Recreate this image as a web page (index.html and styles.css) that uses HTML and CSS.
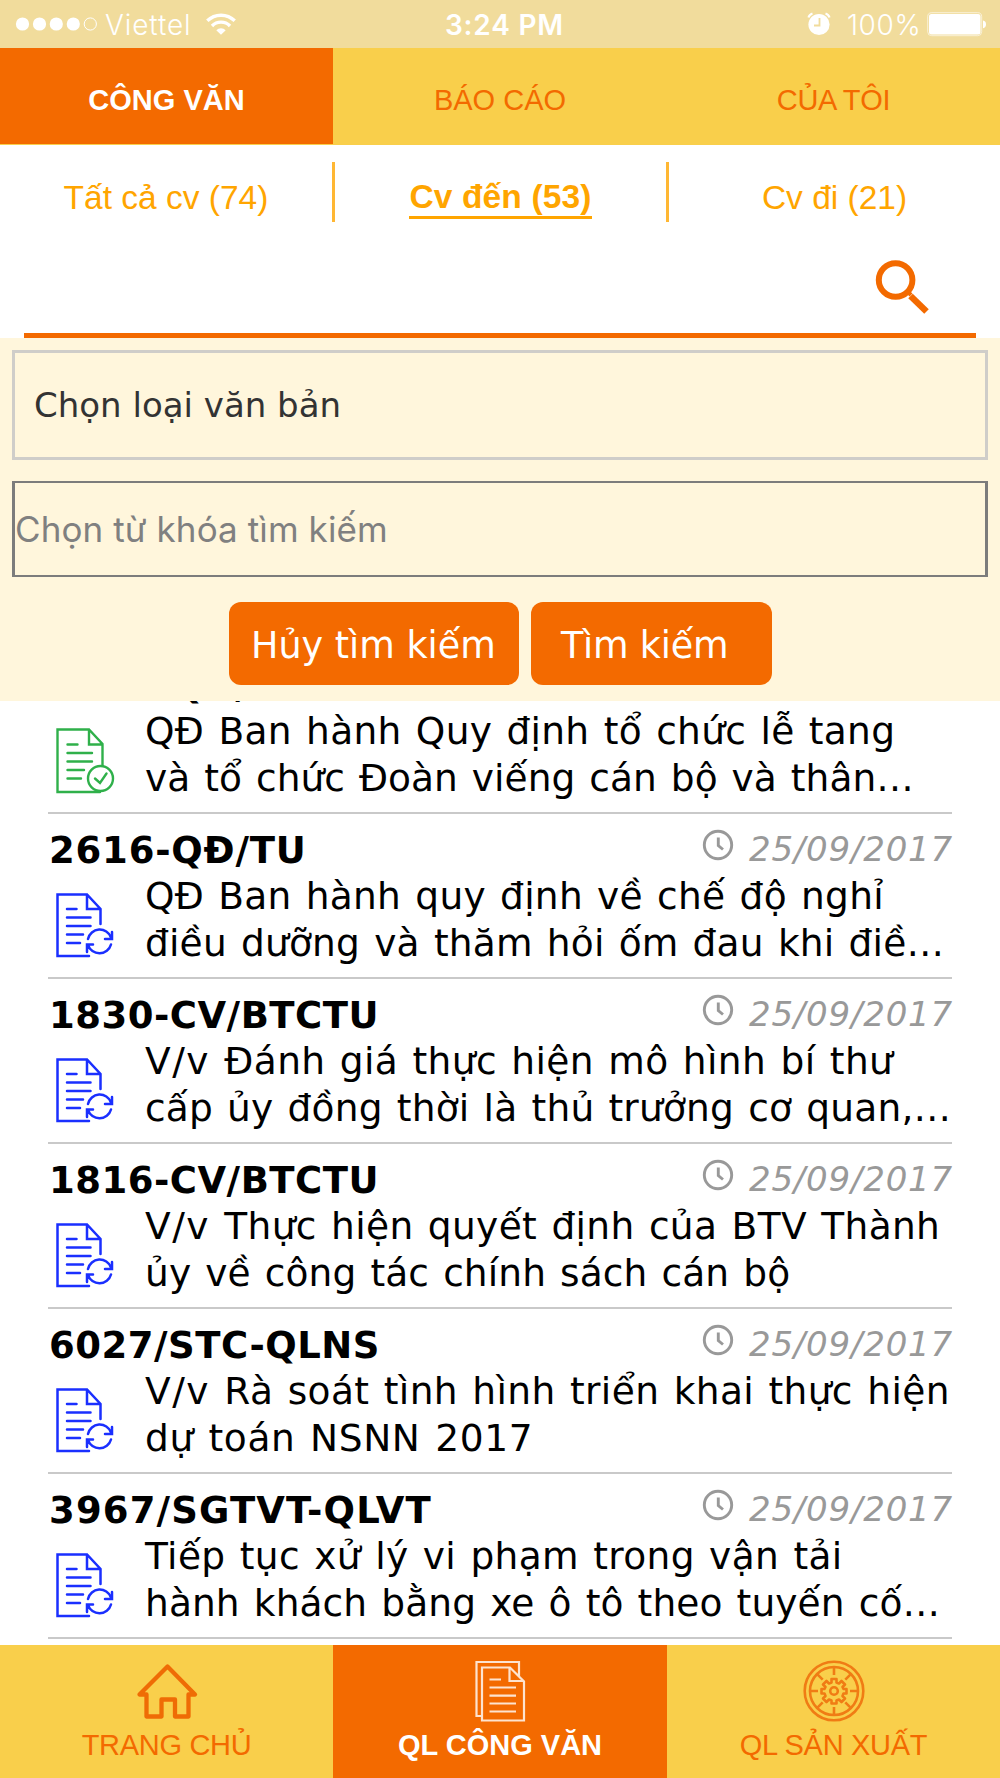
FILE: index.html
```html
<!DOCTYPE html>
<html lang="vi">
<head>
<meta charset="utf-8">
<title>Công văn</title>
<link rel="stylesheet" href="styles.css">
</head>
<body>
<svg class="defs" aria-hidden="true">
  <symbol id="doc-sync" viewBox="0 0 60 68">
    <g fill="none" stroke="currentColor" stroke-width="2.500" stroke-linecap="round">
      <path d="M33 65H1.500V3.500H31L44.500 18V33M31 3.500V18H44.500"/>
      <path d="M11 18H20.500M11 26.500H34.500M11 35H34.500M11 43.500H27M11 52H24"/>
      <path d="M32 48A12 12 0 0 1 55 46.500M56 41V48H49M55 53.500A12 12 0 0 1 32 54M31 61V53.500H37"/>
    </g>
  </symbol>
  <symbol id="doc-check" viewBox="0 0 60 68">
    <g fill="none" stroke="currentColor" stroke-width="2.400" stroke-linecap="round">
      <path d="M44 66H1.500V3.500H33L46.500 18V39.500M33 3.500V18.500H46.500"/>
      <path d="M11.500 18.500H21.500M11.500 27H36M11.500 35.500H36M11.500 44H28M11.500 52.500H25"/>
      <circle cx="44.500" cy="52.500" r="12.500"/>
      <path d="M39 52.500L44 57L50.500 47.500"/>
    </g>
  </symbol>
  <symbol id="clock" viewBox="0 0 32 32">
    <g fill="none" stroke="currentColor" stroke-width="2.900">
      <circle cx="16" cy="16" r="13.700"/>
      <path d="M16.300 8.500V16.500L21 20.500"/>
    </g>
  </symbol>
</svg>

<header class="status">
  <svg class="signal" width="84" height="16" viewBox="0 0 84 16">
    <g fill="#fff"><circle cx="7.500" cy="8" r="6.600"/><circle cx="24.500" cy="8" r="6.600"/><circle cx="41.300" cy="8" r="6.600"/><circle cx="58.300" cy="8" r="6.600"/></g>
    <circle cx="75.300" cy="8" r="6.100" fill="none" stroke="#fff"/>
  </svg>
  <span class="carrier">Viettel</span>
  <svg class="wifi" width="30" height="22" viewBox="0 0 30 22">
    <g fill="none" stroke="#fff" stroke-width="3.400"><path d="M1.300 7.800A19.500 19.500 0 0 1 28.700 7.800"/><path d="M6 13A12.500 12.500 0 0 1 24 13"/></g>
    <path d="M10.300 17.200A6.700 6.700 0 0 1 19.700 17.200L15 21.700Z" fill="#fff"/>
  </svg>
  <span class="time">3:24 PM</span>
  <svg class="alarm" width="24" height="24" viewBox="0 0 24 24">
    <circle cx="12" cy="12.500" r="10.600" fill="#fff"/>
    <path d="M1.500 5.500A6 6 0 0 1 5.500 1.500M18.500 1.500A6 6 0 0 1 22.500 5.500" fill="none" stroke="#fff" stroke-width="2.200"/>
    <path d="M12.500 6V13.500H7" fill="none" stroke="#f1dc9c" stroke-width="1.800"/>
  </svg>
  <span class="percent">100%</span>
  <svg class="battery" width="60" height="25" viewBox="0 0 60 25">
    <rect x=".7" y=".7" width="54" height="23" rx="4" fill="none" stroke="#fff" stroke-opacity=".6"/>
    <rect x="2" y="2" width="51.500" height="20.500" rx="2.500" fill="#fff"/>
    <path d="M56 8.500Q59 9 59 12.300T56 16.200Z" fill="#fff"/>
  </svg>
</header>

<nav class="tabs">
  <a class="tab active">CÔNG VĂN</a>
  <a class="tab">BÁO CÁO</a>
  <a class="tab tight">CỦA TÔI</a>
</nav>

<nav class="filters">
  <a class="filter"><span>Tất cả cv (74)</span></a>
  <a class="filter active"><span>Cv đến (53)</span></a>
  <a class="filter"><span>Cv đi (21)</span></a>
</nav>

<div class="search">
  <svg width="56" height="56" viewBox="0 0 56 56" fill="none" stroke="#f36a00">
    <circle cx="21.600" cy="22" r="16.800" stroke-width="6"/>
    <path d="M33 33L37 37" stroke-width="4"/>
    <path d="M36.500 38L52.500 53.500" stroke-width="6.500"/>
  </svg>
</div>

<section class="panel">
  <div class="select">Chọn loại văn bản</div>
  <div class="keyword">Chọn từ khóa tìm kiếm</div>
  <div class="actions">
    <button class="btn cancel">Hủy tìm kiếm</button>
    <button class="btn submit">Tìm kiếm</button>
  </div>
</section>

<main class="list">
  <article class="row">
    <div class="head"><b class="code c1">2615-QĐ/TU</b><svg class="clock"><use href="#clock"/></svg><i class="date">25/09/2017</i></div>
    <div class="body"><svg class="doc done"><use href="#doc-check"/></svg>
      <p class="desc"><span class="s-30">QĐ Ban hành Quy định tổ chức lễ tang</span><span class="s-05">và tổ chức Đoàn viếng cán bộ và thân…</span></p></div>
  </article>
  <article class="row">
    <div class="head"><b class="code c1">2616-QĐ/TU</b><svg class="clock"><use href="#clock"/></svg><i class="date">25/09/2017</i></div>
    <div class="body"><svg class="doc"><use href="#doc-sync"/></svg>
      <p class="desc"><span class="s-27">QĐ Ban hành quy định về chế độ nghỉ</span><span class="s-20">điều dưỡng và thăm hỏi ốm đau khi điề…</span></p></div>
  </article>
  <article class="row">
    <div class="head"><b class="code c2">1830-CV/BTCTU</b><svg class="clock"><use href="#clock"/></svg><i class="date">25/09/2017</i></div>
    <div class="body"><svg class="doc"><use href="#doc-sync"/></svg>
      <p class="desc"><span class="s-40"><em>V/v</em> Đánh giá thực hiện mô hình bí thư</span><span class="s-20">cấp ủy đồng thời là thủ trưởng cơ quan,…</span></p></div>
  </article>
  <article class="row">
    <div class="head"><b class="code c2">1816-CV/BTCTU</b><svg class="clock"><use href="#clock"/></svg><i class="date">25/09/2017</i></div>
    <div class="body"><svg class="doc"><use href="#doc-sync"/></svg>
      <p class="desc"><span class="s-35"><em>V/v</em> Thực hiện quyết định của BTV Thành</span><span class="s-12">ủy về công tác chính sách cán bộ</span></p></div>
  </article>
  <article class="row">
    <div class="head"><b class="code c2">6027/STC-QLNS</b><svg class="clock"><use href="#clock"/></svg><i class="date">25/09/2017</i></div>
    <div class="body"><svg class="doc"><use href="#doc-sync"/></svg>
      <p class="desc"><span class="s-40"><em>V/v</em> Rà soát tình hình triển khai thực hiện</span><span class="s-65">dự toán NSNN 2017</span></p></div>
  </article>
  <article class="row">
    <div class="head"><b class="code c3">3967/SGTVT-QLVT</b><svg class="clock"><use href="#clock"/></svg><i class="date">25/09/2017</i></div>
    <div class="body"><svg class="doc"><use href="#doc-sync"/></svg>
      <p class="desc"><span class="s-35">Tiếp tục xử lý vi phạm trong vận tải</span><span class="s-12">hành khách bằng xe ô tô theo tuyến cố…</span></p></div>
  </article>
</main>

<nav class="bottom">
  <a class="item tight">
    <svg width="64" height="62" viewBox="0 0 64 62" fill="none" stroke="#ef6c05" stroke-width="4.300" stroke-linejoin="round"><path d="M32.500 6.500L60 34.500H53.500V56.500H40V39.500H26.500V56.500H11.500V34.500H4.500Z"/></svg>
    <span>TRANG CHỦ</span>
  </a>
  <a class="item active">
    <svg width="64" height="62" viewBox="0 0 64 62" fill="none" stroke="#fde3cf" stroke-width="2.200"><path d="M13 56H8.500V2H51V16M14 7.500H42L56 21.500V60.500H14ZM41.500 7.500V21H56"/><path d="M21.500 19.500H33M21.500 27.500H48M21.500 35.700H48M21.500 43.500H48M21.500 51.500H48"/></svg>
    <span>QL CÔNG VĂN</span>
  </a>
  <a class="item tight">
    <svg width="64" height="62" viewBox="0 0 64 62" fill="none" stroke="#f07c14" stroke-width="2.600">
      <circle cx="32" cy="31" r="29.300"/><circle cx="32" cy="31" r="24"/><circle cx="32" cy="31" r="3.800"/>
      <path d="M32 8V15M32 47V54M9 31H16M48 31H55M15.700 14.700L20.700 19.700M43.300 42.300L48.300 47.300M15.700 47.300L20.700 42.300M43.300 19.700L48.300 14.700"/>
      <path stroke-linejoin="round" d="M29.500 19H34.500V22.500L37 23.500L39.500 21L43 24.500L40.500 27L41.500 29H44.500V33.500H41.500L40.500 36L43 38.500L39.500 42L37 39.500L34.500 40.500V43.500H29.500V40.500L27 39.500L24.500 42L21 38.500L23.500 36L22.500 33.500H19.500V29H22.500L23.500 27L21 24.500L24.500 21L27 23.500L29.500 22.500Z"/>
    </svg>
    <span>QL SẢN XUẤT</span>
  </a>
</nav>
</body>
</html>
```
FILE: styles.css
```css
* { box-sizing: border-box; }
body {
  margin: 0;
  width: 1000px;
  height: 1778px;
  overflow: hidden;
  display: flex;
  flex-direction: column;
  background: #fff;
  font-family: "DejaVu Sans", Verdana, sans-serif;
}
svg { display: block; flex: none; }
.defs { position: absolute; width: 0; height: 0; }

.status {
  flex: none;
  height: 48px;
  display: flex;
  align-items: center;
  padding: 3px 13px 0 15px;
  background: #f1dc9c;
  color: #fff;
  font: 300 28px/45px Inter, sans-serif;
}
.signal { margin-top: -4px; }
.carrier { margin-left: 6px; width: 101px; letter-spacing: .9px; }
.wifi { margin-top: -4px; }
.time { margin-left: 209px; width: 362px; font-weight: 600; letter-spacing: .8px; }
.alarm { margin-top: -3px; }
.percent { margin-left: 16px; width: 79px; letter-spacing: .6px; }
.battery { margin-top: -3px; margin-left: auto; }

.tabs {
  flex: none;
  height: 97px;
  display: grid;
  grid-template-columns: 333px 334px 333px;
  padding-bottom: 2px;
  background: #f9cf4b;
  font: 29px/87px "Liberation Sans", Arial, sans-serif;
  text-align: center;
  color: #f36a00;
}
.tab { padding-top: 9px; }
.tab.active { background: #f36a00; color: #fff; font-weight: bold; }
.tight { letter-spacing: -.3px; }

.filters {
  flex: none;
  height: 95px;
  padding-top: 17px;
  display: grid;
  grid-template-columns: 335px 334px 331px;
  font: 33.5px/40px "Liberation Sans", Arial, sans-serif;
  color: #ffa500;
}
.filter {
  height: 60px;
  padding-top: 16px;
  display: flex;
  justify-content: center;
  align-items: flex-start;
  border-right: 3px solid #ffb733;
}
.filter:last-child { border: 0; }
.filter.active { padding-top: 15px; font-weight: bold; letter-spacing: .15px; }
.filter.active span { height: 42px; border-bottom: 3px solid #ffa500; }

.search {
  flex: none;
  height: 98px;
  margin: 0 24px;
  padding: 18px 46px 0 0;
  display: flex;
  justify-content: flex-end;
  border-bottom: 5px solid #f36a00;
}

.panel {
  flex: none;
  height: 363px;
  padding: 12px;
  background: #fff6dc;
}
.select {
  height: 110px;
  padding: 0 0 0 19px;
  border: 3px solid #cfcdc9;
  font-size: 34px;
  line-height: 104px;
  color: #333;
}
.keyword {
  height: 96px;
  margin-top: 21px;
  border: 2px solid #7c7c7c;
  border-width: 2px 3px;
  font: 35px/92px Inter, sans-serif;
  letter-spacing: .1px;
  color: #808080;
}
.actions { display: flex; gap: 12px; margin: 25px 0 0 217px; }
.btn {
  height: 83px;
  padding: 4px 0 0;
  border: 0;
  border-radius: 12px;
  background: #f36a00;
  color: #fff;
  font: 36.5px/79px "DejaVu Sans", Verdana, sans-serif;
  text-align: left;
}
.cancel { width: 290px; padding-left: 22px; }
.submit { width: 241px; padding-left: 30px; letter-spacing: -.2px; }

.list {
  flex: none;
  height: 944px;
  overflow: hidden;
  padding: 0 48px;
}
.row {
  height: 165px;
  border-bottom: 2px solid #c9c9c9;
}
.row:first-child { margin-top: -52px; }
.head { display: flex; height: 59px; padding-top: 13px; color: #999; }
.code { color: #000; font-size: 37px; line-height: 48px; margin: 0 auto 0 1px; }
.c1 { letter-spacing: .8px; }
.c2 { letter-spacing: .5px; }
.c3 { letter-spacing: 1.15px; }
.clock { width: 32px; height: 32px; margin: 2px 15px 0 0; }
.date { width: 203px; font-size: 34px; line-height: 44px; letter-spacing: .8px; white-space: nowrap; }
.body { display: flex; }
.doc { width: 60px; height: 68px; margin: 18px 0 0 8px; color: #1a2fff; }
.doc.done { color: #2fb04a; }
.desc {
  margin: 0 0 0 29px;
  font-size: 37.5px;
  line-height: 46.6px;
  word-spacing: 2px;
  white-space: nowrap;
  color: #000;
}
.desc span { display: block; }
.desc em { font-style: normal; letter-spacing: 1.5px; }
.s-05 { letter-spacing: .05px; }
.s-12 { letter-spacing: .12px; }
.s-20 { letter-spacing: .2px; }
.s-27 { letter-spacing: .27px; }
.s-30 { letter-spacing: .31px; }
.s-35 { letter-spacing: .36px; }
.s-40 { letter-spacing: .4px; }
.s-65 { letter-spacing: .65px; }

.bottom {
  flex: none;
  height: 133px;
  display: grid;
  grid-template-columns: 333px 334px 333px;
  background: #f9cf4b;
  font: 29px/46px "Liberation Sans", Arial, sans-serif;
  color: #f36a00;
}
.item { display: flex; flex-direction: column; align-items: center; padding-top: 15px; }
.item.active { background: #f36a00; color: #fff; font-weight: bold; }
```
